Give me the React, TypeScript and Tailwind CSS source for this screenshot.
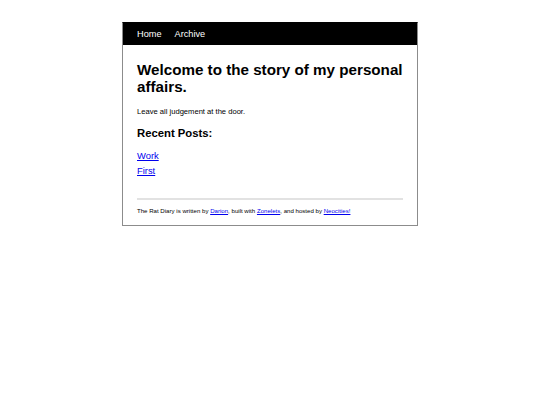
export default function App() {
  const font = { fontFamily: '"Liberation Sans", Arial, sans-serif' };
  return (
    <div className="min-h-[405px] bg-white pt-[22px] antialiased" style={font}>
      <div className="w-[296px] mx-auto border border-[#8c8c8c] border-t-black bg-white">
        <nav className="h-[22px] bg-black flex items-center px-[14px] gap-[13px] text-[9.2px] leading-[11px] text-white">
          <span>Home</span>
          <span>Archive</span>
        </nav>
        <div className="px-[14px] pb-[11px] text-black">
          <h1 className="mt-[16px] text-[15.2px] leading-[17px] font-bold text-black">
            Welcome to the story of my personal affairs.
          </h1>
          <p className="mt-[12px] text-[7.6px] leading-[9px]">Leave all judgement at the door.</p>
          <h2 className="mt-[11px] text-[11.3px] leading-[13px] font-bold text-black">Recent Posts:</h2>
          <ul className="mt-[10px] flex flex-col gap-[4px] text-[9.4px] leading-[11px]">
            <li>
              <a href="#" className="text-[#0000ee] underline">Work</a>
            </li>
            <li>
              <a href="#" className="text-[#0000ee] underline">First</a>
            </li>
          </ul>
          <div className="mt-[22px] h-[2px] bg-[#e2e2e2]" />
          <p className="mt-[7px] text-[6.1px] leading-[7px]">
            The Rat Diary is written by{" "}
            <a href="#" className="text-[#0000ee] underline">Darion</a>, built with{" "}
            <a href="#" className="text-[#0000ee] underline">Zonelets</a>, and hosted by{" "}
            <a href="#" className="text-[#0000ee] underline">Neocities!</a>
          </p>
        </div>
      </div>
    </div>
  );
}
